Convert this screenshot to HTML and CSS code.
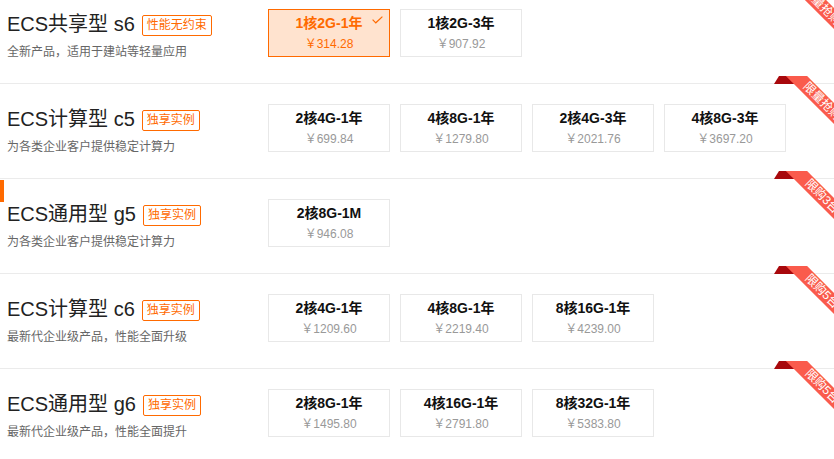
FILE: index.html
```html
<!DOCTYPE html>
<html lang="zh-CN">
<head>
<meta charset="utf-8">
<title>ECS</title>
<link rel="stylesheet" href="styles.css">
</head>
<body>
<div class="list">
  <div class="row">
    <div class="info">
      <div class="title-line"><span class="title">ECS共享型 s6</span><span class="tag">性能无约束</span></div>
      <div class="desc">全新产品，适用于建站等轻量应用</div>
    </div>
    <div class="specs">
      <div class="spec selected">
        <div class="name">1核2G-1年</div><div class="price">￥314.28</div>
        <svg class="check" width="11" height="8" viewBox="0 0 11 8"><polyline points="0.6,3.6 3.8,6.8 10.4,0.6" fill="none" stroke="#ff6a00" stroke-width="1.2"/></svg>
      </div>
      <div class="spec"><div class="name">1核2G-3年</div><div class="price">￥907.92</div></div>
    </div>
    <div class="ribbon"><span class="fold"></span><div class="band">限量抢购</div></div>
  </div>

  <div class="row">
    <div class="info">
      <div class="title-line"><span class="title">ECS计算型 c5</span><span class="tag">独享实例</span></div>
      <div class="desc">为各类企业客户提供稳定计算力</div>
    </div>
    <div class="specs">
      <div class="spec"><div class="name">2核4G-1年</div><div class="price">￥699.84</div></div>
      <div class="spec"><div class="name">4核8G-1年</div><div class="price">￥1279.80</div></div>
      <div class="spec"><div class="name">2核4G-3年</div><div class="price">￥2021.76</div></div>
      <div class="spec"><div class="name">4核8G-3年</div><div class="price">￥3697.20</div></div>
    </div>
    <div class="ribbon"><span class="fold"></span><div class="band">限量抢购</div></div>
  </div>

  <div class="row active">
    <div class="info">
      <div class="title-line"><span class="title">ECS通用型 g5</span><span class="tag">独享实例</span></div>
      <div class="desc">为各类企业客户提供稳定计算力</div>
    </div>
    <div class="specs">
      <div class="spec"><div class="name">2核8G-1M</div><div class="price">￥946.08</div></div>
    </div>
    <div class="ribbon"><span class="fold"></span><div class="band">限购3台</div></div>
  </div>

  <div class="row">
    <div class="info">
      <div class="title-line"><span class="title">ECS计算型 c6</span><span class="tag">独享实例</span></div>
      <div class="desc">最新代企业级产品，性能全面升级</div>
    </div>
    <div class="specs">
      <div class="spec"><div class="name">2核4G-1年</div><div class="price">￥1209.60</div></div>
      <div class="spec"><div class="name">4核8G-1年</div><div class="price">￥2219.40</div></div>
      <div class="spec"><div class="name">8核16G-1年</div><div class="price">￥4239.00</div></div>
    </div>
    <div class="ribbon"><span class="fold"></span><div class="band">限购5台</div></div>
  </div>

  <div class="row">
    <div class="info">
      <div class="title-line"><span class="title">ECS通用型 g6</span><span class="tag">独享实例</span></div>
      <div class="desc">最新代企业级产品，性能全面提升</div>
    </div>
    <div class="specs">
      <div class="spec"><div class="name">2核8G-1年</div><div class="price">￥1495.80</div></div>
      <div class="spec"><div class="name">4核16G-1年</div><div class="price">￥2791.80</div></div>
      <div class="spec"><div class="name">8核32G-1年</div><div class="price">￥5383.80</div></div>
    </div>
    <div class="ribbon"><span class="fold"></span><div class="band">限购5台</div></div>
  </div>
</div>
</body>
</html>
```

FILE: styles.css
```css
html, body {
  margin: 0;
  padding: 0;
  background: #fff;
  overflow: hidden;
}
body {
  font-family: "Liberation Sans", "Noto Sans CJK SC", sans-serif;
  color: #333;
}
.list {
  margin-top: -11px;
}
.row {
  position: relative;
  display: flex;
  height: 94px;
  padding-left: 7px;
  border-bottom: 1px solid #ebebeb;
}
.row.active::before {
  content: "";
  position: absolute;
  left: 0;
  top: 1px;
  width: 4px;
  height: 22px;
  background: #ff6a00;
}
.info {
  flex: none;
  width: 261px;
  padding-top: 23px;
}
.title-line {
  display: flex;
  align-items: center;
  height: 24px;
}
.title {
  font-size: 20px;
  line-height: 24px;
  color: #222;
  white-space: nowrap;
}
.tag {
  margin-left: 7px;
  margin-top: 2px;
  padding: 0 4px;
  font-size: 12px;
  line-height: 19px;
  border: 1px solid #ff6a00;
  border-radius: 2px;
  color: #ff6a00;
  white-space: nowrap;
}
.desc {
  margin-top: 7px;
  font-size: 12px;
  line-height: 18px;
  color: #666;
  white-space: nowrap;
}
.specs {
  display: flex;
  align-items: flex-start;
  gap: 10px;
  padding-top: 20px;
}
.spec {
  position: relative;
  box-sizing: border-box;
  width: 122px;
  height: 48px;
  padding-top: 3px;
  border: 1px solid #e8e8e8;
  text-align: center;
  background: #fff;
}
.name {
  font-size: 14px;
  font-weight: bold;
  line-height: 21px;
  color: #111;
}
.price {
  font-size: 12px;
  line-height: 20px;
  color: #999;
}
.spec.selected {
  background: #ffe3cf;
  border-color: #ff6a00;
}
.spec.selected .name,
.spec.selected .price {
  color: #ff6a00;
}
.check {
  position: absolute;
  top: 6px;
  right: 6px;
}
.ribbon {
  position: absolute;
  top: -8px;
  right: -12px;
  width: 72px;
  height: 72px;
  overflow: hidden;
  z-index: 2;
}
.fold {
  position: absolute;
  left: 0;
  top: 0;
  width: 22px;
  height: 8px;
  background: #a8080c;
  clip-path: polygon(0 100%, 5px 0, 100% 0, 100% 100%);
}
.band {
  position: absolute;
  left: -2px;
  top: 18px;
  width: 100px;
  height: 15px;
  line-height: 15px;
  transform: rotate(45deg);
  background: #fa5b4c;
  color: #fff;
  font-size: 12px;
  text-align: center;
  white-space: nowrap;
}
```
